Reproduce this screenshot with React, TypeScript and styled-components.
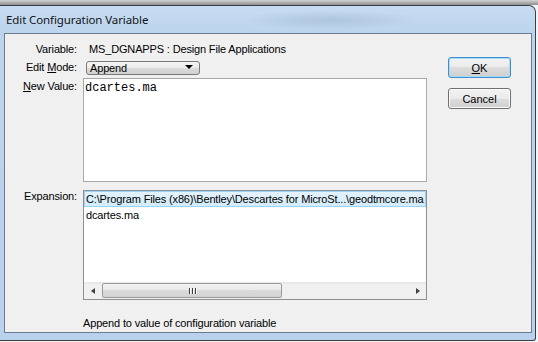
import React from "react";
import styled, { createGlobalStyle } from "styled-components";

const Global = createGlobalStyle`
  html, body { margin: 0; padding: 0; }
  body {
    width: 538px;
    height: 342px;
    overflow: hidden;
    background: #f4f4f4;
    font-family: "Liberation Sans", Arial, sans-serif;
    font-size: 11px;
    letter-spacing: -0.15px;
    color: #000;
  }
  * { box-sizing: border-box; }
`;

const Desktop = styled.div`
  width: 538px;
  height: 342px;
  padding-top: 5px;
  background: linear-gradient(to bottom, #d2d2d2 0, #8e8e8e 5px, #f4f4f4 5px);
  overflow: hidden;
`;

const Window = styled.div`
  width: 536px;
  height: 336px;
  display: flex;
  flex-direction: column;
  padding: 0 3px 7px 4px;
  border-top: 1px solid #3a3f46;
  border-right: 1px solid #3a3f46;
  border-bottom: 1px solid #3a3f46;
  border-top-right-radius: 7px;
  border-bottom-right-radius: 3px;
  background:
    radial-gradient(ellipse 90px 10px at 330px 14px, rgba(120, 140, 170, 0.25), transparent),
    linear-gradient(to bottom, #c7dcf2 0, #bcd4ee 28px, #b9d1ec 100%);
`;

const TitleBar = styled.div`
  height: 27px;
  padding: 7px 0 0 2px;
  font-family: "Noto Sans", "Liberation Sans", sans-serif;
  font-size: 11.5px;
  letter-spacing: -0.1px;
  line-height: 14px;
  color: #141414;
`;

const Client = styled.div`
  flex: 1;
  display: flex;
  align-items: flex-start;
  padding: 8px 20px 0 0;
  border: 1px solid #6b7c90;
  background: #f0f0f0;
`;

const Form = styled.div`
  display: grid;
  grid-template-columns: 72px 344px;
  grid-template-rows: 19px 17px 112px 109px auto;
  column-gap: 6px;
  align-items: start;
`;

const Label = styled.div<{ $top?: number; $lh?: number }>`
  text-align: right;
  line-height: ${(p) => p.$lh ?? 14}px;
  margin-top: ${(p) => p.$top ?? 0}px;
  white-space: nowrap;
`;

const Value = styled.div`
  line-height: 14px;
  padding-left: 6px;
  white-space: nowrap;
`;

const Combo = styled.div`
  margin-left: 3px;
  width: 114px;
  height: 14px;
  display: flex;
  align-items: center;
  justify-content: space-between;
  padding: 0 6px 0 3px;
  border: 1px solid #7a7a7a;
  border-radius: 3px;
  background: linear-gradient(to bottom, #f4f4f4 0, #ebebeb 50%, #dcdcdc 50%, #d0d0d0 100%);
  line-height: 12px;
`;

const ComboArrow = styled.span`
  width: 0;
  height: 0;
  margin-top: -2px;
  border-left: 4px solid transparent;
  border-right: 4px solid transparent;
  border-top: 4px solid #000;
`;

const TextBox = styled.div`
  height: 104px;
  padding: 2px 1px;
  border: 1px solid #a9a9a9;
  background: #fff;
  font-family: "Liberation Mono", "Courier New", monospace;
  font-size: 12px;
  letter-spacing: 0;
  line-height: 14px;
`;

const ListBox = styled.div`
  height: 110px;
  display: flex;
  flex-direction: column;
  border: 1px solid #8e8f8f;
  background: #fff;
`;

const Rows = styled.div`
  flex: 1;
`;

const Row = styled.div<{ $selected?: boolean }>`
  height: 16px;
  line-height: 14px;
  padding: 0 1px;
  white-space: nowrap;
  overflow: hidden;
  border: 1px solid ${(p) => (p.$selected ? "#9ad3f7" : "transparent")};
  background: ${(p) => (p.$selected ? "linear-gradient(to bottom, #e3f3fd, #d3ecfb)" : "transparent")};
`;

const HScroll = styled.div`
  height: 17px;
  display: flex;
  align-items: center;
  background: linear-gradient(to bottom, #e6e6e6, #f0f0f0 3px, #f0f0f0);
`;

const ScrollBtn = styled.div`
  width: 17px;
  height: 17px;
  display: flex;
  align-items: center;
  justify-content: center;
`;

const ArrowLeft = styled.span`
  width: 0;
  height: 0;
  border-top: 3.5px solid transparent;
  border-bottom: 3.5px solid transparent;
  border-right: 4px solid #404040;
`;

const ArrowRight = styled.span`
  width: 0;
  height: 0;
  border-top: 3.5px solid transparent;
  border-bottom: 3.5px solid transparent;
  border-left: 4px solid #404040;
`;

const Track = styled.div`
  flex: 1;
  height: 17px;
  display: flex;
  align-items: center;
  padding-left: 1px;
`;

const Thumb = styled.div`
  width: 180px;
  height: 15px;
  display: flex;
  align-items: center;
  justify-content: center;
  gap: 2px;
  border: 1px solid #9a9a9a;
  border-radius: 2px;
  background: linear-gradient(to bottom, #f3f3f3, #e8e8e8 50%, #dadada 50%, #d4d4d4);
`;

const Grip = styled.span`
  width: 1px;
  height: 6px;
  background: #3c3c3c;
  box-shadow: 1px 0 0 #fff;
`;

const Status = styled.div`
  grid-column: 2;
  margin-top: 17px;
  line-height: 14px;
  white-space: nowrap;
`;

const Buttons = styled.div`
  margin-left: 21px;
  margin-top: 15px;
  display: flex;
  flex-direction: column;
  gap: 10px;
`;

const Button = styled.button<{ $default?: boolean }>`
  width: 63px;
  height: 21px;
  padding: 0;
  font-family: "Liberation Sans", Arial, sans-serif;
  font-size: 11px;
  color: #000;
  border: 1px solid ${(p) => (p.$default ? "#3c8fd0" : "#707070")};
  border-radius: 3px;
  box-shadow: ${(p) => (p.$default ? "inset 0 0 0 1px #a8dbf8" : "inset 0 0 0 1px #fbfbfb")};
  background: linear-gradient(to bottom, #f2f2f2 0, #ebebeb 50%, #dddddd 50%, #cfcfcf 100%);
`;

export default function App() {
  return (
    <>
      <Global />
      <Desktop>
        <Window>
          <TitleBar>Edit Configuration Variable</TitleBar>
          <Client>
            <Form>
              <Label>Variable:</Label>
              <Value>MS_DGNAPPS : Design File Applications</Value>

              <Label $lh={13}>
                Edit <u>M</u>ode:
              </Label>
              <Combo>
                <span>Append</span>
                <ComboArrow />
              </Combo>

              <Label $top={1}>
                <u>N</u>ew Value:
              </Label>
              <TextBox>dcartes.ma</TextBox>

              <Label $top={-1}>Expansion:</Label>
              <ListBox>
                <Rows>
                  <Row $selected>
                    C:\Program Files (x86)\Bentley\Descartes for MicroSt...\geodtmcore.ma
                  </Row>
                  <Row>dcartes.ma</Row>
                </Rows>
                <HScroll>
                  <ScrollBtn>
                    <ArrowLeft />
                  </ScrollBtn>
                  <Track>
                    <Thumb>
                      <Grip />
                      <Grip />
                      <Grip />
                    </Thumb>
                  </Track>
                  <ScrollBtn>
                    <ArrowRight />
                  </ScrollBtn>
                </HScroll>
              </ListBox>

              <Status>Append to value of configuration variable</Status>
            </Form>
            <Buttons>
              <Button $default>
                <u>O</u>K
              </Button>
              <Button>Cancel</Button>
            </Buttons>
          </Client>
        </Window>
      </Desktop>
    </>
  );
}
